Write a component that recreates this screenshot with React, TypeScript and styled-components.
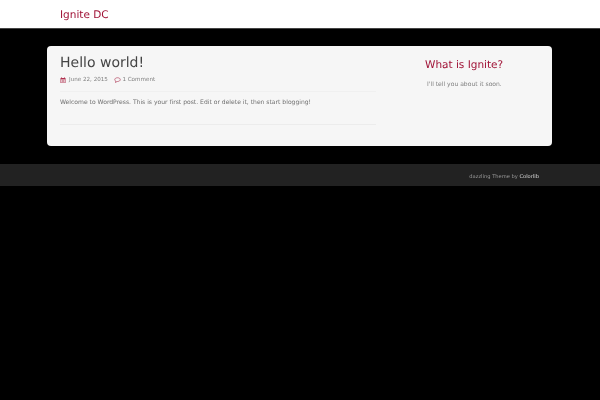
import { createGlobalStyle, css, styled } from 'styled-components';

const GlobalStyle = createGlobalStyle`
  html, body {
    margin: 0;
    height: 100%;
    background: #000;
  }
  body {
    font-family: "DejaVu Sans", sans-serif;
    font-size: 6.05px;
    color: #707070;
    text-rendering: geometricPrecision;
  }
`;

// the reference text is soft, no crisp hinted edges
const softText = css`
  filter: blur(0.25px);
`;

const Navbar = styled.header`
  height: 27px;
  padding: 1px 0 0 60px;
  background: #fff;
  border-bottom: 1px solid #444;
  display: flex;
  align-items: center;
`;

const Brand = styled.a`
  ${softText}
  font-size: 10.5px;
  color: #a01236;
`;

const Page = styled.main`
  width: 505px;
  height: 100px;
  margin: 17px 0 18px 47px;
  padding: 0 13px;
  box-sizing: border-box;
  background: #f6f6f6;
  border-radius: 4px;
  display: flex;
`;

const Content = styled.article`
  width: 316px;
`;

const Title = styled.h1`
  ${softText}
  margin: 7px 0 0;
  font-size: 14px;
  line-height: 20px;
  font-weight: 400;
  color: #444;
`;

const Meta = styled.div`
  ${softText}
  display: flex;
  align-items: center;
  margin-top: 1px;
  height: 12px;
  font-size: 5.6px;
  color: #808080;
`;

const MetaItem = styled.span<{ $gap: number }>`
  display: flex;
  align-items: center;
  gap: ${(p) => p.$gap}px;
  margin-right: 6.5px;
`;

const Post = styled.div`
  margin-top: 5px;
  padding-top: 6px;
  height: 26px;
  border-top: 1px solid #f0f0f0;
`;

const Body = styled.p`
  ${softText}
  margin: 0;
  line-height: 9px;
`;

const Rule = styled.hr`
  margin: 0;
  border: 0;
  border-top: 1px solid #ececec;
`;

const Sidebar = styled.aside`
  margin-left: 49px;
`;

const WidgetTitle = styled.h3`
  ${softText}
  margin: 12px 0 0;
  font-size: 10.5px;
  line-height: 14px;
  font-weight: 400;
  color: #a01236;
`;

const WidgetText = styled.p`
  ${softText}
  margin: 8px 0 0 2px;
  line-height: 9px;
  color: #808080;
`;

const Footer = styled.footer`
  height: 19px;
  padding: 3px 61px 0 0;
  background: #222;
  display: flex;
  align-items: center;
  justify-content: flex-end;
  font-size: 5.15px;
  color: #999;
`;

const FooterText = styled.span`
  ${softText}
`;

const FooterLink = styled.a`
  color: #ddd;
`;

const CalendarIcon = () => (
  <svg width="6" height="6" viewBox="0 0 12 12" fill="#b0304f">
    <path d="M1 2h2V0h1v2h4V0h1v2h2v10H1zM2 5v6h8V5z" />
    <path d="M3 6h6v1H3zM3 8h6v1H3z" />
  </svg>
);

const CommentIcon = () => (
  <svg width="7" height="6" viewBox="0 0 14 12" fill="none" stroke="#a01236" strokeWidth="1.1">
    <path d="M7 1.5c3 0 5.5 1.5 5.5 3.7S10 9 7 9H6l-3 2 .6-2.6C2 7.8 1.5 6.5 1.5 5.2 1.5 3 4 1.5 7 1.5z" />
  </svg>
);

export default function App() {
  return (
    <>
      <GlobalStyle />
      <Navbar>
        <Brand>Ignite DC</Brand>
      </Navbar>
      <Page>
        <Content>
          <Title>Hello world!</Title>
          <Meta>
            <MetaItem $gap={3}>
              <CalendarIcon />
              June 22, 2015
            </MetaItem>
            <MetaItem $gap={1}>
              <CommentIcon />
              1 Comment
            </MetaItem>
          </Meta>
          <Post>
            <Body>Welcome to WordPress. This is your first post. Edit or delete it, then start blogging!</Body>
          </Post>
          <Rule />
        </Content>
        <Sidebar>
          <WidgetTitle>What is Ignite?</WidgetTitle>
          <WidgetText>I'll tell you about it soon.</WidgetText>
        </Sidebar>
      </Page>
      <Footer>
        <FooterText>
          dazzling Theme by <FooterLink>Colorlib</FooterLink>
        </FooterText>
      </Footer>
    </>
  );
}
